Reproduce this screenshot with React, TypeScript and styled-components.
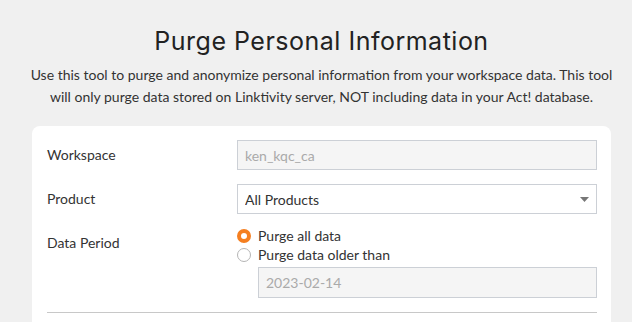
import React, { useState } from 'react'
import styled, { createGlobalStyle, css } from 'styled-components'

const GlobalStyle = createGlobalStyle`
    html, body {
        margin: 0;
        padding: 0;
        background: #f0f0f0;
    }
    * {
        box-sizing: border-box;
    }
`

const Page = styled.div`
    width: 632px;
    height: 322px;
    overflow: hidden;
    padding: 26px 21px 0 32px;
    font-family: Lato, "Liberation Sans", sans-serif;
    color: #333;
`

const Title = styled.h1`
    margin: 0;
    font-family: Inter, "Noto Sans", sans-serif;
    font-weight: 400;
    font-size: 25px;
    line-height: 30px;
    letter-spacing: 0.5px;
    color: #222;
    text-align: center;
`

const Intro = styled.p`
    margin: 8px -4px 0 -4px;
    font-size: 14px;
    line-height: 22px;
    text-align: center;
    color: #333;
`

const Card = styled.div`
    margin-top: 18px;
    background: #fff;
    border-radius: 8px 8px 0 0;
    padding: 14px 14px 20px 15px;
`

const Row = styled.div`
    display: grid;
    grid-template-columns: 190px 1fr;
    margin-bottom: 14px;
`

const Label = styled.div`
    font-size: 14px;
    line-height: 20px;
    padding-top: 5px;
    color: #333;
`

const fieldBox = css`
    width: 100%;
    height: 30px;
    border: 1px solid #ccd0d6;
    font-family: Lato, "Liberation Sans", sans-serif;
    font-size: 14px;
    padding: 0 7px;
    outline: none;
`

const TextInput = styled.input`
    ${fieldBox}
    background: #f5f5f5;
    color: #aaa;
    &::placeholder {
        color: #aaa;
    }
`

const SelectWrap = styled.div`
    position: relative;
`

const Select = styled.select`
    ${fieldBox}
    appearance: none;
    background: #fff;
    color: #333;
`

const Arrow = styled.svg`
    position: absolute;
    right: 8px;
    top: 13px;
    width: 9px;
    height: 5px;
    pointer-events: none;
`

const RadioGroup = styled.div`
    display: flex;
    flex-direction: column;
    margin-top: -2px;
`

const RadioRow = styled.label`
    display: flex;
    align-items: center;
    gap: 7px;
    height: 19px;
    font-size: 14px;
    color: #333;
    cursor: pointer;
`

const RadioDot = styled.span<{ checked?: boolean }>`
    width: 14px;
    height: 14px;
    border-radius: 50%;
    flex: none;
    ${({ checked }) => checked ? css`
        border: 4px solid #f57f20;
        background: #fff;
    ` : css`
        border: 1px solid #b5b5b5;
        background: #fff;
    `}
`

const DateInput = styled(TextInput)`
    margin: 3px 0 0 21px;
    width: calc(100% - 21px);
    height: 31px;
`

const Divider = styled.hr`
    margin: 14px 0 0;
    border: 0;
    border-top: 1px solid #c8c8c8;
`

export default function App() {
    const [period, setPeriod] = useState('all')
    return (
        <Page>
            <GlobalStyle />
            <Title>Purge Personal Information</Title>
            <Intro>
                Use this tool to purge and anonymize personal information from your workspace data. This tool
                will only purge data stored on Linktivity server, NOT including data in your Act! database.
            </Intro>
            <Card>
                <Row>
                    <Label>Workspace</Label>
                    <TextInput value="ken_kqc_ca" readOnly />
                </Row>
                <Row>
                    <Label>Product</Label>
                    <SelectWrap>
                        <Select defaultValue="all">
                            <option value="all">All Products</option>
                        </Select>
                        <Arrow viewBox="0 0 9 5">
                            <path d="M0 0h9L4.5 5z" fill="#777" />
                        </Arrow>
                    </SelectWrap>
                </Row>
                <Row>
                    <Label>Data Period</Label>
                    <RadioGroup>
                        <RadioRow onClick={() => setPeriod('all')}>
                            <RadioDot checked={period === 'all'} />
                            Purge all data
                        </RadioRow>
                        <RadioRow onClick={() => setPeriod('older')}>
                            <RadioDot checked={period === 'older'} />
                            Purge data older than
                        </RadioRow>
                        <DateInput value="2023-02-14" readOnly />
                    </RadioGroup>
                </Row>
                <Divider />
            </Card>
        </Page>
    )
}
